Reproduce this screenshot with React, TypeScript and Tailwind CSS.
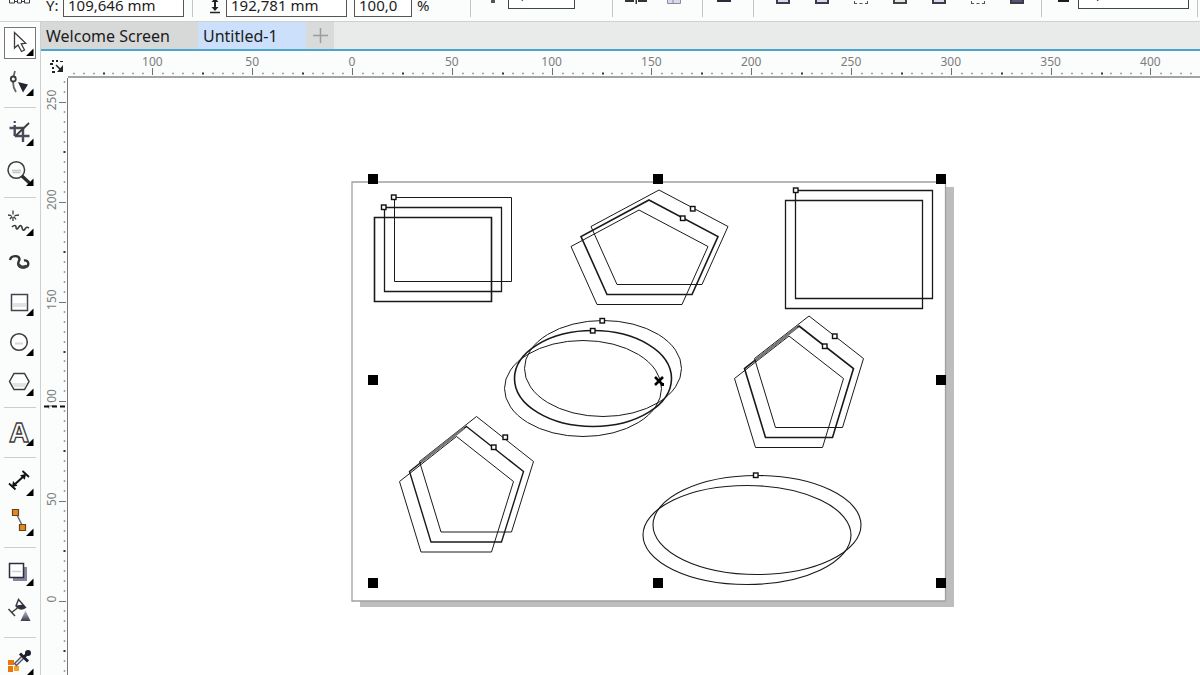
/**
 * Vector drawing workspace: clipped property bar, toolbox, document tabs,
 * rulers and the canvas with the blended outline shapes.
 */
import type { ReactNode } from 'react'

const TICK_STEP = 99.8

export default function App() {
  return (
    <div className="flex h-screen flex-col overflow-hidden bg-[#fbfcfc] font-['Noto_Sans',sans-serif] text-[#1c1c1c]">
      <PropertyBar />
      <div className="flex min-h-0 flex-1">
        <Toolbox />
        <div className="flex min-w-0 flex-1 flex-col">
          <DocumentTabs />
          <div className="flex">
            <div className="w-[27px] shrink-0">
              <RulerOrigin />
            </div>
            <HorizontalRuler />
          </div>
          <div className="flex min-h-0 flex-1">
            <VerticalRuler />
            <Canvas />
          </div>
        </div>
      </div>
    </div>
  )
}

/* ---------- Property bar ---------- */

function Divider() {
  return <div className="h-6 w-px shrink-0 bg-[#c4c4c4]" />
}

function PropertyBar() {
  const field = 'h-6 border border-[#555] bg-white px-1 text-[15px] outline-none'

  return (
    <header className="flex h-[22px] shrink-0 items-end overflow-hidden border-b border-[#cfcfcf] pb-1 whitespace-nowrap">
      <div className="flex w-[46px] shrink-0 pl-2">
        <svg width="23" height="17" viewBox="0 0 23 17" className="block" fill="none" stroke="#3a3a44" aria-hidden="true">
          <path d="M1.5 0v3h5V0M9.5 0v3h4V0M16.5 0v3h5V0M6.5 1.5h3M13.500 1.500h3" />
        </svg>
      </div>
      <label htmlFor="pos-y" className="w-[17px] shrink-0 text-[15px] leading-6">
        Y:
      </label>
      <input id="pos-y" defaultValue="109,646 mm" className={`${field} w-[121px]`} />
      <div className="flex w-[42px] shrink-0 items-end gap-4 pl-2">
        <Divider />
        <svg width="12" height="24" viewBox="0 0 12 24" className="block" stroke="#222" fill="#222" aria-hidden="true">
          <path d="M6 4v12" strokeWidth="2" />
          <path d="M2.500 14h7L6 18zM2.500 9h7L6 5z" stroke="none" />
          <path d="M1 19.500h10" strokeWidth="1.500" />
        </svg>
      </div>
      <input aria-label="Height" defaultValue="192,781 mm" className={`${field} w-[121px]`} />
      <div className="w-[7px] shrink-0" />
      <input id="scale" defaultValue="100,0" className={`${field} w-[58px]`} />
      <label htmlFor="scale" className="w-[58px] shrink-0 pl-[5px] text-[15px] leading-6">
        %
      </label>
      <Divider />
      <div className="mb-[14px] ml-5 size-1 shrink-0 bg-[#555]" />
      <input
        aria-label="Rotation"
        defaultValue="0,0"
        className="mb-2 ml-[13px] h-8 w-[67px] border border-[#444] bg-white px-1 text-sm outline-none"
      />
      <div className="w-[37px] shrink-0" />
      <Divider />
      <div className="flex w-[89px] shrink-0 items-end gap-5 pl-3">
        <svg width="22" height="18" viewBox="0 0 22 18" className="block" fill="#333" aria-hidden="true">
          <path d="M0 1h9v2H0zM13 1h9v2h-9zM10.500 0h1.500v5h-1.500z" />
        </svg>
        <svg width="15" height="17" viewBox="0 0 15 17" className="block" aria-hidden="true">
          <path d="M.5 0v3.500h13V0" fill="#d8d8ec" stroke="#8a8a98" />
          <path d="M6 0v3" stroke="#8a8a98" />
        </svg>
      </div>
      <Divider />
      <div className="w-[50px] shrink-0 pl-[14px]">
        <div className="mb-[15px] h-4 w-[14px] bg-[#2b2b3a]" />
      </div>
      <Divider />
      <div className="flex w-[287px] shrink-0 gap-[25px] pl-[22px]">
        <ClippedBox />
        <ClippedBox />
        <ClippedBox kind="dashed" />
        <ClippedBox kind="plain" />
        <ClippedBox />
        <ClippedBox kind="dashed" />
        <ClippedBox kind="solid" />
      </div>
      <Divider />
      <div className="mb-[15px] ml-4 h-4 w-[11px] shrink-0 bg-[#1d1d1d]" />
      <select
        aria-label="Outline width"
        className="mb-2 ml-[9px] h-8 w-[111px] shrink-0 appearance-none border border-[#444] bg-white px-2 text-base"
      >
        <option>0,2 mm</option>
      </select>
      <div className="w-2 shrink-0" />
      <Divider />
    </header>
  )
}

function ClippedBox({ kind = 'tint' }: { kind?: 'tint' | 'plain' | 'dashed' | 'solid' }) {
  const look = {
    tint: 'border-2 border-[#3b3b4b] bg-[#d9d9ee]',
    plain: 'border-2 border-[#444] bg-[#e6e6e6]',
    dashed: 'border border-dashed border-[#555]',
    solid: 'border-2 border-[#3b3b4b] bg-[#55566f]'
  }[kind]
  return <div className={`mb-[13px] h-4 w-[14px] shrink-0 ${look}`} />
}

/* ---------- Toolbox ---------- */

function Tool({
  label,
  active = false,
  flyout = true,
  children
}: {
  label: string
  active?: boolean
  flyout?: boolean
  children: ReactNode
}) {
  return (
    <button
      type="button"
      aria-label={label}
      className={`my-1 size-8 shrink-0 ${active ? 'bg-white outline outline-[#777] -outline-offset-1' : ''}`}
    >
      <svg width="32" height="32" viewBox="0 0 32 32" fill="none" stroke="#3c3c3c" strokeWidth="1.500" className="block">
        {children}
        {flyout && <path d="M29.500 21.500v7.500h-7.500z" fill="#000" stroke="none" />}
      </svg>
    </button>
  )
}

function ToolDivider() {
  return <div className="mt-1 mb-[5px] h-px w-8 shrink-0 bg-[#cdcdcd]" />
}

function Toolbox() {
  return (
    <nav
      aria-label="Toolbox"
      className="flex w-[41px] shrink-0 flex-col items-center overflow-hidden border-r border-[#cfcfcf] pt-px"
    >
      <Tool label="Pick" active>
        <path d="M10.500 5.500v15.500l3.500-3 3.500 6.500 3-1.500-3.300-6.200 4.500-.5z" fill="#fff" strokeWidth="1.300" />
      </Tool>
      <Tool label="Shape">
        <path d="M11 4l-1.500 5.500M9 15c0 4 1 7 3 10" stroke="#666" strokeWidth="1.800" />
        <circle cx="9.300" cy="12" r="2.500" strokeWidth="1.800" />
        <path d="M14 15l10 2.500-5 8z" fill="#242432" stroke="none" />
      </Tool>
      <ToolDivider />
      <Tool label="Crop">
        <path d="M5.500 11H20M10.700 8v11M10.700 19H25.500M19 11v14" stroke="#4a4a5a" strokeWidth="2.400" />
        <path d="M25 6L12 18.500" strokeWidth="1.800" />
        <path d="M9.700 4h2v2h-2z" fill="#3c3c3c" stroke="none" />
      </Tool>
      <Tool label="Zoom">
        <circle cx="12.300" cy="13" r="8.300" />
        <path d="M8 13.500h9M8.500 15.500h8" stroke="#c4c4c4" />
        <path d="M18 19l7.500 7" stroke="#2c2c2c" strokeWidth="3.200" />
      </Tool>
      <ToolDivider />
      <Tool label="Freehand">
        <path d="M9 3.500v4M9 10v4M4 8l3.500.700M10.500 8.700L15 8M6 12l2-2.500M12 12.500l-2-3" strokeWidth="1.300" />
        <path d="M8 20c2-2 4-2 4 0s1 3 2.500.5 3-2.500 3.500 0 1.500 4 3 1.500 2.500-2 4-1" strokeWidth="1.600" />
      </Tool>
      <Tool label="Artistic media" flyout={false}>
        <path
          d="M6 13c1-5 9-5 9.500-1 .2 2-2.500 3-1 6 2 4 10 3 9.800-1.500-.1-2-2-3.500-4.300-3"
          stroke="#333"
          strokeWidth="2.400"
        />
        <path d="M14.500 17c1 3 5 4 8 2" strokeWidth="3" />
      </Tool>
      <Tool label="Rectangle">
        <path d="M7.500 7.500h16v16h-16z" fill="#fff" stroke="#444450" />
        <path d="M9 16h13v4H9z" fill="#e2e2e2" stroke="none" />
      </Tool>
      <Tool label="Ellipse">
        <circle cx="15" cy="15" r="8.300" fill="#fff" />
        <path d="M11 16.500h8" stroke="#d8d8d8" strokeWidth="2" />
      </Tool>
      <Tool label="Polygon">
        <path d="M5.500 14.500l4.500-8h10.500l4.500 8-4.500 8H10z" fill="#fff" />
        <path d="M8 16h15l-2 4H10z" fill="#e2e2e2" stroke="none" />
      </Tool>
      <ToolDivider />
      <Tool label="Text">
        <text
          x="15"
          y="25"
          textAnchor="middle"
          fontSize="27"
          fontWeight="700"
          fill="#fff"
          strokeWidth="1.300"
          fontFamily="Noto Sans, sans-serif"
        >
          A
        </text>
      </Tool>
      <ToolDivider />
      <Tool label="Dimension">
        <path d="M9 19L21 8" stroke="#111" strokeWidth="2" />
        <path d="M5 16.500l6.500 6M18.500 4l6.500 6" stroke="#111" strokeWidth="1.800" />
        <path d="M8 20l1-6 4.500 4.800zM22 7l-6 1.200 4.800 4.500z" fill="#111" stroke="none" />
      </Tool>
      <Tool label="Connector">
        <path d="M12 6l6 12" stroke="#66727c" />
        <path d="M8.500 2.500h6v6h-6zM15.500 17.500h6v6h-6z" fill="#e08a26" stroke="#6b4413" strokeWidth="1.200" />
      </Tool>
      <ToolDivider />
      <Tool label="Drop shadow">
        <path d="M9 10h14v14H9z" fill="#85859e" stroke="none" />
        <path d="M5.500 6.500h14v14h-14z" fill="#fff" stroke="#2f2f3c" />
        <path d="M8 14.500h9" stroke="#d0d0d0" />
      </Tool>
      <Tool label="Transparency" flyout={false}>
        <defs>
          <linearGradient id="fade" x1="0" y1="0" x2="0" y2="1">
            <stop offset="0" stopColor="#c4c4d0" />
            <stop offset="1" stopColor="#3a3a4c" />
          </linearGradient>
        </defs>
        <path d="M14.500 2.500l-2.500 6.500c1.500 3 6 4 9.500 1.500z" fill="#fff" />
        <path d="M12 8.500c2 3.500 6 4.500 9.500 2l-2-3z" fill="#2e2e3c" stroke="none" />
        <path d="M13.500 11L7.500 15.500M4.500 12l6.500 7" />
        <path d="M21.500 13.500l5 10.500h-10z" fill="url(#fade)" stroke="none" />
      </Tool>
      <ToolDivider />
      <Tool label="Color eyedropper">
        <path d="M4 13h6v5H4zM4 19h5v6H4z" fill="#e8780c" stroke="none" />
        <path d="M10 19h5v5h-5z" fill="#f5a124" stroke="none" />
        <path d="M11 18l8-8" stroke="#555563" strokeWidth="4" />
        <path d="M12 17l7-7" stroke="#e4e4ec" strokeWidth="1.500" />
        <path d="M16 6.500l8 8M20 10l4-4" stroke="#20202c" strokeWidth="3" />
        <circle cx="24" cy="6" r="3" fill="#20202c" stroke="none" />
      </Tool>
    </nav>
  )
}

/* ---------- Tabs ---------- */

function DocumentTabs() {
  return (
    <div className="flex h-[29px] shrink-0 border-b-2 border-[#4ba6cf] bg-[#e9eaea] text-base">
      <button type="button" className="w-[157px] bg-[#d7d8d8] pl-[5px] text-left">
        Welcome Screen
      </button>
      <button type="button" className="w-[108px] bg-[#cce0fb] pl-[5px] text-left">
        Untitled-1
      </button>
      <button type="button" aria-label="New document" className="flex w-7 items-center justify-center bg-[#d9dada]">
        <svg width="15" height="15" viewBox="0 0 15 15" stroke="#9c9c9c" strokeWidth="1.500">
          <path d="M7.500 0v15M0 7.500h15" />
        </svg>
      </button>
    </div>
  )
}

/* ---------- Rulers ---------- */

function RulerOrigin() {
  return (
    <svg width="27" height="27" viewBox="0 0 27 27" className="block" aria-hidden="true">
      <path
        d="M11 9h2v2h-2zM15 9h2v2h-2zM19 10h3v1h-3zM9 12h3v2H9zM11 16h2v2h-2zM11 20h3v2h-3zM22 14v7h-6z"
        fill="#222"
      />
      <path d="M15 14l5 5" stroke="#222" strokeWidth="1.500" />
    </svg>
  )
}

function HorizontalRuler() {
  const zero = 284
  const minor = Array.from({ length: 240 }, (_, i) => i - 28)

  return (
    <div className="h-[27px] min-w-0 flex-1 border-b-2 border-[#a3a3a3]">
      <svg width="100%" height="25" className="block" aria-label="Horizontal ruler">
        {minor.map((n) => {
          const x = Math.round(zero + (n * TICK_STEP) / 10)
          if (n % 10 === 0) return <path key={n} d={`M${x + 0.5} 17v7`} stroke="#6e6e6e" />
          const strong = n % 5 === 0
          return <path key={n} d={`M${x} 22.500h2`} stroke={strong ? '#333' : '#a0a0a0'} strokeWidth={strong ? 2 : 1.5} />
        })}
        {minor
          .filter((n) => n % 10 === 0)
          .map((n) => (
            <text key={n} x={zero + (n * TICK_STEP) / 10} y="15" textAnchor="middle" fontSize="12" fill="#7c7c7c">
              {Math.abs(n * 5)}
            </text>
          ))}
      </svg>
    </div>
  )
}

function VerticalRuler() {
  const zero = 523
  const minor = Array.from({ length: 68 }, (_, i) => 52 - i)

  return (
    <div className="w-[27px] shrink-0 overflow-hidden border-r border-[#777]">
      <svg width="26" height="100%" className="block" aria-label="Vertical ruler">
        {minor.map((n) => {
          const y = Math.round(zero - (n * TICK_STEP) / 10)
          if (n % 10 === 0) return <path key={n} d={`M18 ${y + 0.5}h7`} stroke="#777" />
          const strong = n % 5 === 0
          return <path key={n} d={`M23.500 ${y - 1}v2`} stroke={strong ? '#333' : '#a0a0a0'} strokeWidth={strong ? 2 : 1.5} />
        })}
        {minor
          .filter((n) => n % 10 === 0)
          .map((n) => (
            <text
              key={n}
              transform={`translate(15 ${zero - (n * TICK_STEP) / 10 - 2}) rotate(-90)`}
              textAnchor="middle"
              fontSize="12"
              fill="#7c7c7c"
            >
              {Math.abs(n * 5)}
            </text>
          ))}
        {/* cursor position */}
        <path d="M3 328.500h22" stroke="#111" strokeWidth="2" strokeDasharray="5 3" />
      </svg>
    </div>
  )
}

/* ---------- Canvas ---------- */

const SELECTION = [
  [373, 179],
  [658, 179],
  [941, 179],
  [373, 380],
  [941, 380],
  [373, 583],
  [658, 583],
  [941, 583]
]

const NODES = [
  [393.5, 197],
  [383.5, 207],
  [692.5, 208.5],
  [682.5, 218],
  [795.5, 190],
  [602, 320.5],
  [592.5, 330.5],
  [834.5, 336],
  [824.5, 346],
  [505, 437],
  [493.5, 447],
  [755.5, 475]
]

// Each copy of a shape is nudged 10px left and down from the one behind it.
function Stack({ weights, children }: { weights: number[]; children: ReactNode }) {
  return (
    <>
      {weights.map((weight, i) => (
        <g key={i} transform={`translate(${-10 * i} ${10 * i})`} strokeWidth={weight}>
          {children}
        </g>
      ))}
    </>
  )
}

function Canvas() {
  return (
    <main className="min-w-0 flex-1 bg-white">
      <svg width="100%" height="100%" className="block" role="img" aria-label="Drawing canvas">
        <g transform="translate(-68 -78)">
          <path d="M945 187h9v420H360v-6h585z" fill="#bdbdbd" />
          <path d="M352 182h593.500v419H352z" fill="#fff" stroke="#a0a0a0" strokeWidth="1.300" />

          <g fill="none" stroke="#1a1a1a">
            <Stack weights={[1, 1.3, 1.6]}>
              <path d="M394.500 197.500h117v84h-117z" />
            </Stack>
            <Stack weights={[1.3, 1.3]}>
              <path d="M795.500 190.500h137v108h-137z" />
            </Stack>
            <Stack weights={[1, 1.6, 1]}>
              <path d="M659 190l69 36.500-26 58h-85l-26-58z" />
            </Stack>
            <Stack weights={[1, 1.6, 1]}>
              <ellipse cx="603" cy="368.500" rx="78.500" ry="48" />
            </Stack>
            <Stack weights={[1, 1.6, 1]}>
              <path d="M809 316l54.500 42.500-21 69h-67l-21-69z" />
            </Stack>
            <Stack weights={[1, 1.4, 1]}>
              <path d="M476.500 416.500l57 45-22 70.500h-70.500l-21.500-70.500z" />
            </Stack>
            <Stack weights={[1.1, 1.1]}>
              <ellipse cx="757" cy="525" rx="104" ry="49.500" />
            </Stack>
            {/* edges where the pentagon copies run together */}
            <path d="M797 327l-41 33M464 428l-43 34" stroke="#777" strokeWidth="2.500" />
          </g>

          {NODES.map(([x, y]) => (
            <rect key={`${x}-${y}`} x={x - 2} y={y - 2} width="4.500" height="4.500" fill="#fff" stroke="#111" strokeWidth="1.400" />
          ))}
          {SELECTION.map(([x, y]) => (
            <rect key={`${x}-${y}`} x={x - 5} y={y - 5} width="10" height="10" fill="#000" />
          ))}

          <path d="M655 377l8 8M663 377l-8 8" stroke="#000" strokeWidth="2.500" />
          <path d="M661 383h3v3h-3z" fill="#000" />
        </g>
      </svg>
    </main>
  )
}
